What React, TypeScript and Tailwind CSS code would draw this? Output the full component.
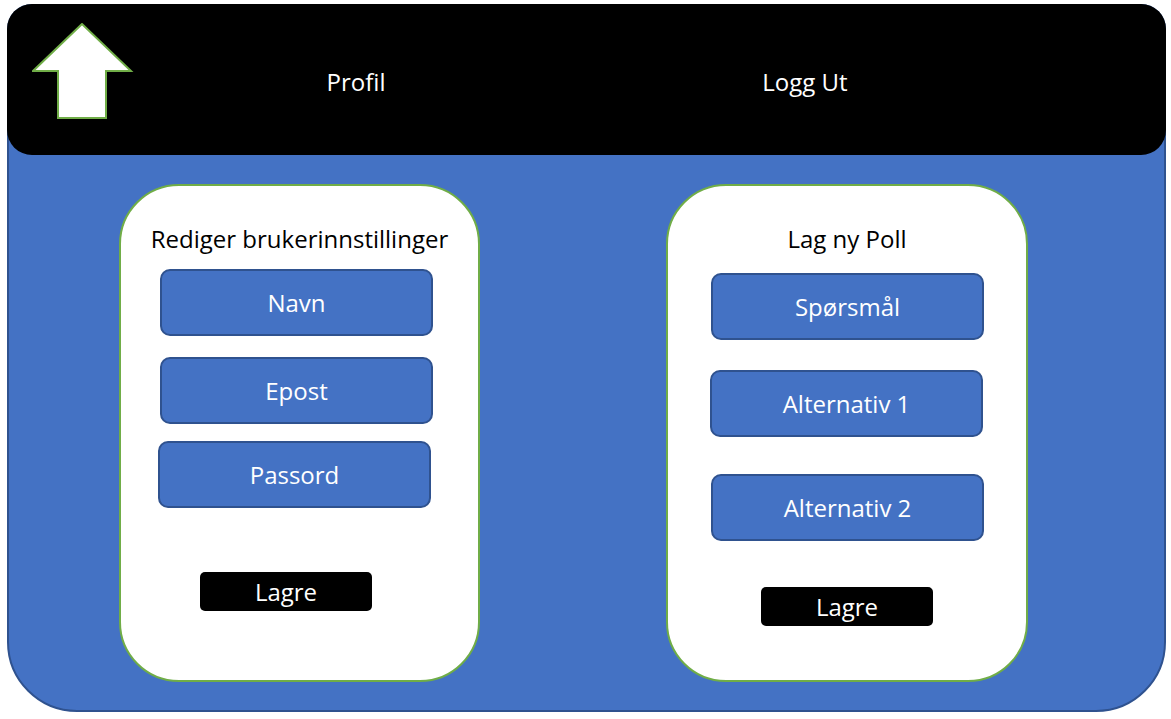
const font = { fontFamily: "'Open Sans', Lato, sans-serif" };

function Field({ label, className }: { label: string; className: string }) {
  return (
    <div
      className={`h-[67px] w-[273px] rounded-[10px] border-2 border-[#2f528f] bg-[#4472c4] flex items-center justify-center text-white text-[24px] ${className}`}
    >
      {label}
    </div>
  );
}

function SaveButton({ className }: { className: string }) {
  return (
    <div
      className={`h-[39px] w-[172px] rounded-[5px] bg-black flex items-center justify-center text-white text-[24px] ${className}`}
    >
      Lagre
    </div>
  );
}

function UpArrow() {
  return (
    <svg width="102" height="98" viewBox="0 0 102 98" className="ml-[25px] mt-[19px] self-start shrink-0">
      <polygon
        points="50,1 1,48 26,48 26,95 74,95 74,48 99,48"
        fill="white"
        stroke="#70ad47"
        strokeWidth="2"
      />
    </svg>
  );
}

export default function App() {
  return (
    <div className="w-[1171px] h-[719px] bg-white pt-[4px] pl-[7px]" style={font}>
      <div className="w-[1159px] h-[708px] rounded-t-[25px] rounded-b-[70px] border-2 border-[#2f528f] bg-[#4472c4]">
        <div className="-mx-[2px] -mt-[2px] h-[151px] rounded-[25px] bg-black flex items-center text-white text-[24px]">
          <UpArrow />
          <div className="w-[444px] text-center pt-[4px]">Profil</div>
          <div className="w-[454px] text-center pt-[4px]">Logg Ut</div>
        </div>

        <div className="flex pt-[29px] pl-[110px] gap-[186px]">
          <div className="w-[361px] h-[498px] rounded-[60px] border-2 border-[#70ad47] bg-white flex flex-col">
            <div className="pt-[38px] h-[68px] leading-[30px] text-center text-[24px] text-black">
              Rediger brukerinnstillinger
            </div>
            <Field label="Navn" className="mt-[15px] ml-[39px]" />
            <Field label="Epost" className="mt-[21px] ml-[39px]" />
            <Field label="Passord" className="mt-[17px] ml-[37px]" />
            <SaveButton className="mt-[64px] ml-[79px]" />
          </div>

          <div className="w-[362px] h-[498px] rounded-[60px] border-2 border-[#70ad47] bg-white flex flex-col">
            <div className="pt-[38px] h-[68px] leading-[30px] text-center text-[24px] text-black">
              Lag ny Poll
            </div>
            <Field label="Spørsmål" className="mt-[19px] ml-[43px]" />
            <Field label="Alternativ 1" className="mt-[30px] ml-[42px]" />
            <Field label="Alternativ 2" className="mt-[37px] ml-[43px]" />
            <SaveButton className="mt-[46px] ml-[93px]" />
          </div>
        </div>
      </div>
    </div>
  );
}
